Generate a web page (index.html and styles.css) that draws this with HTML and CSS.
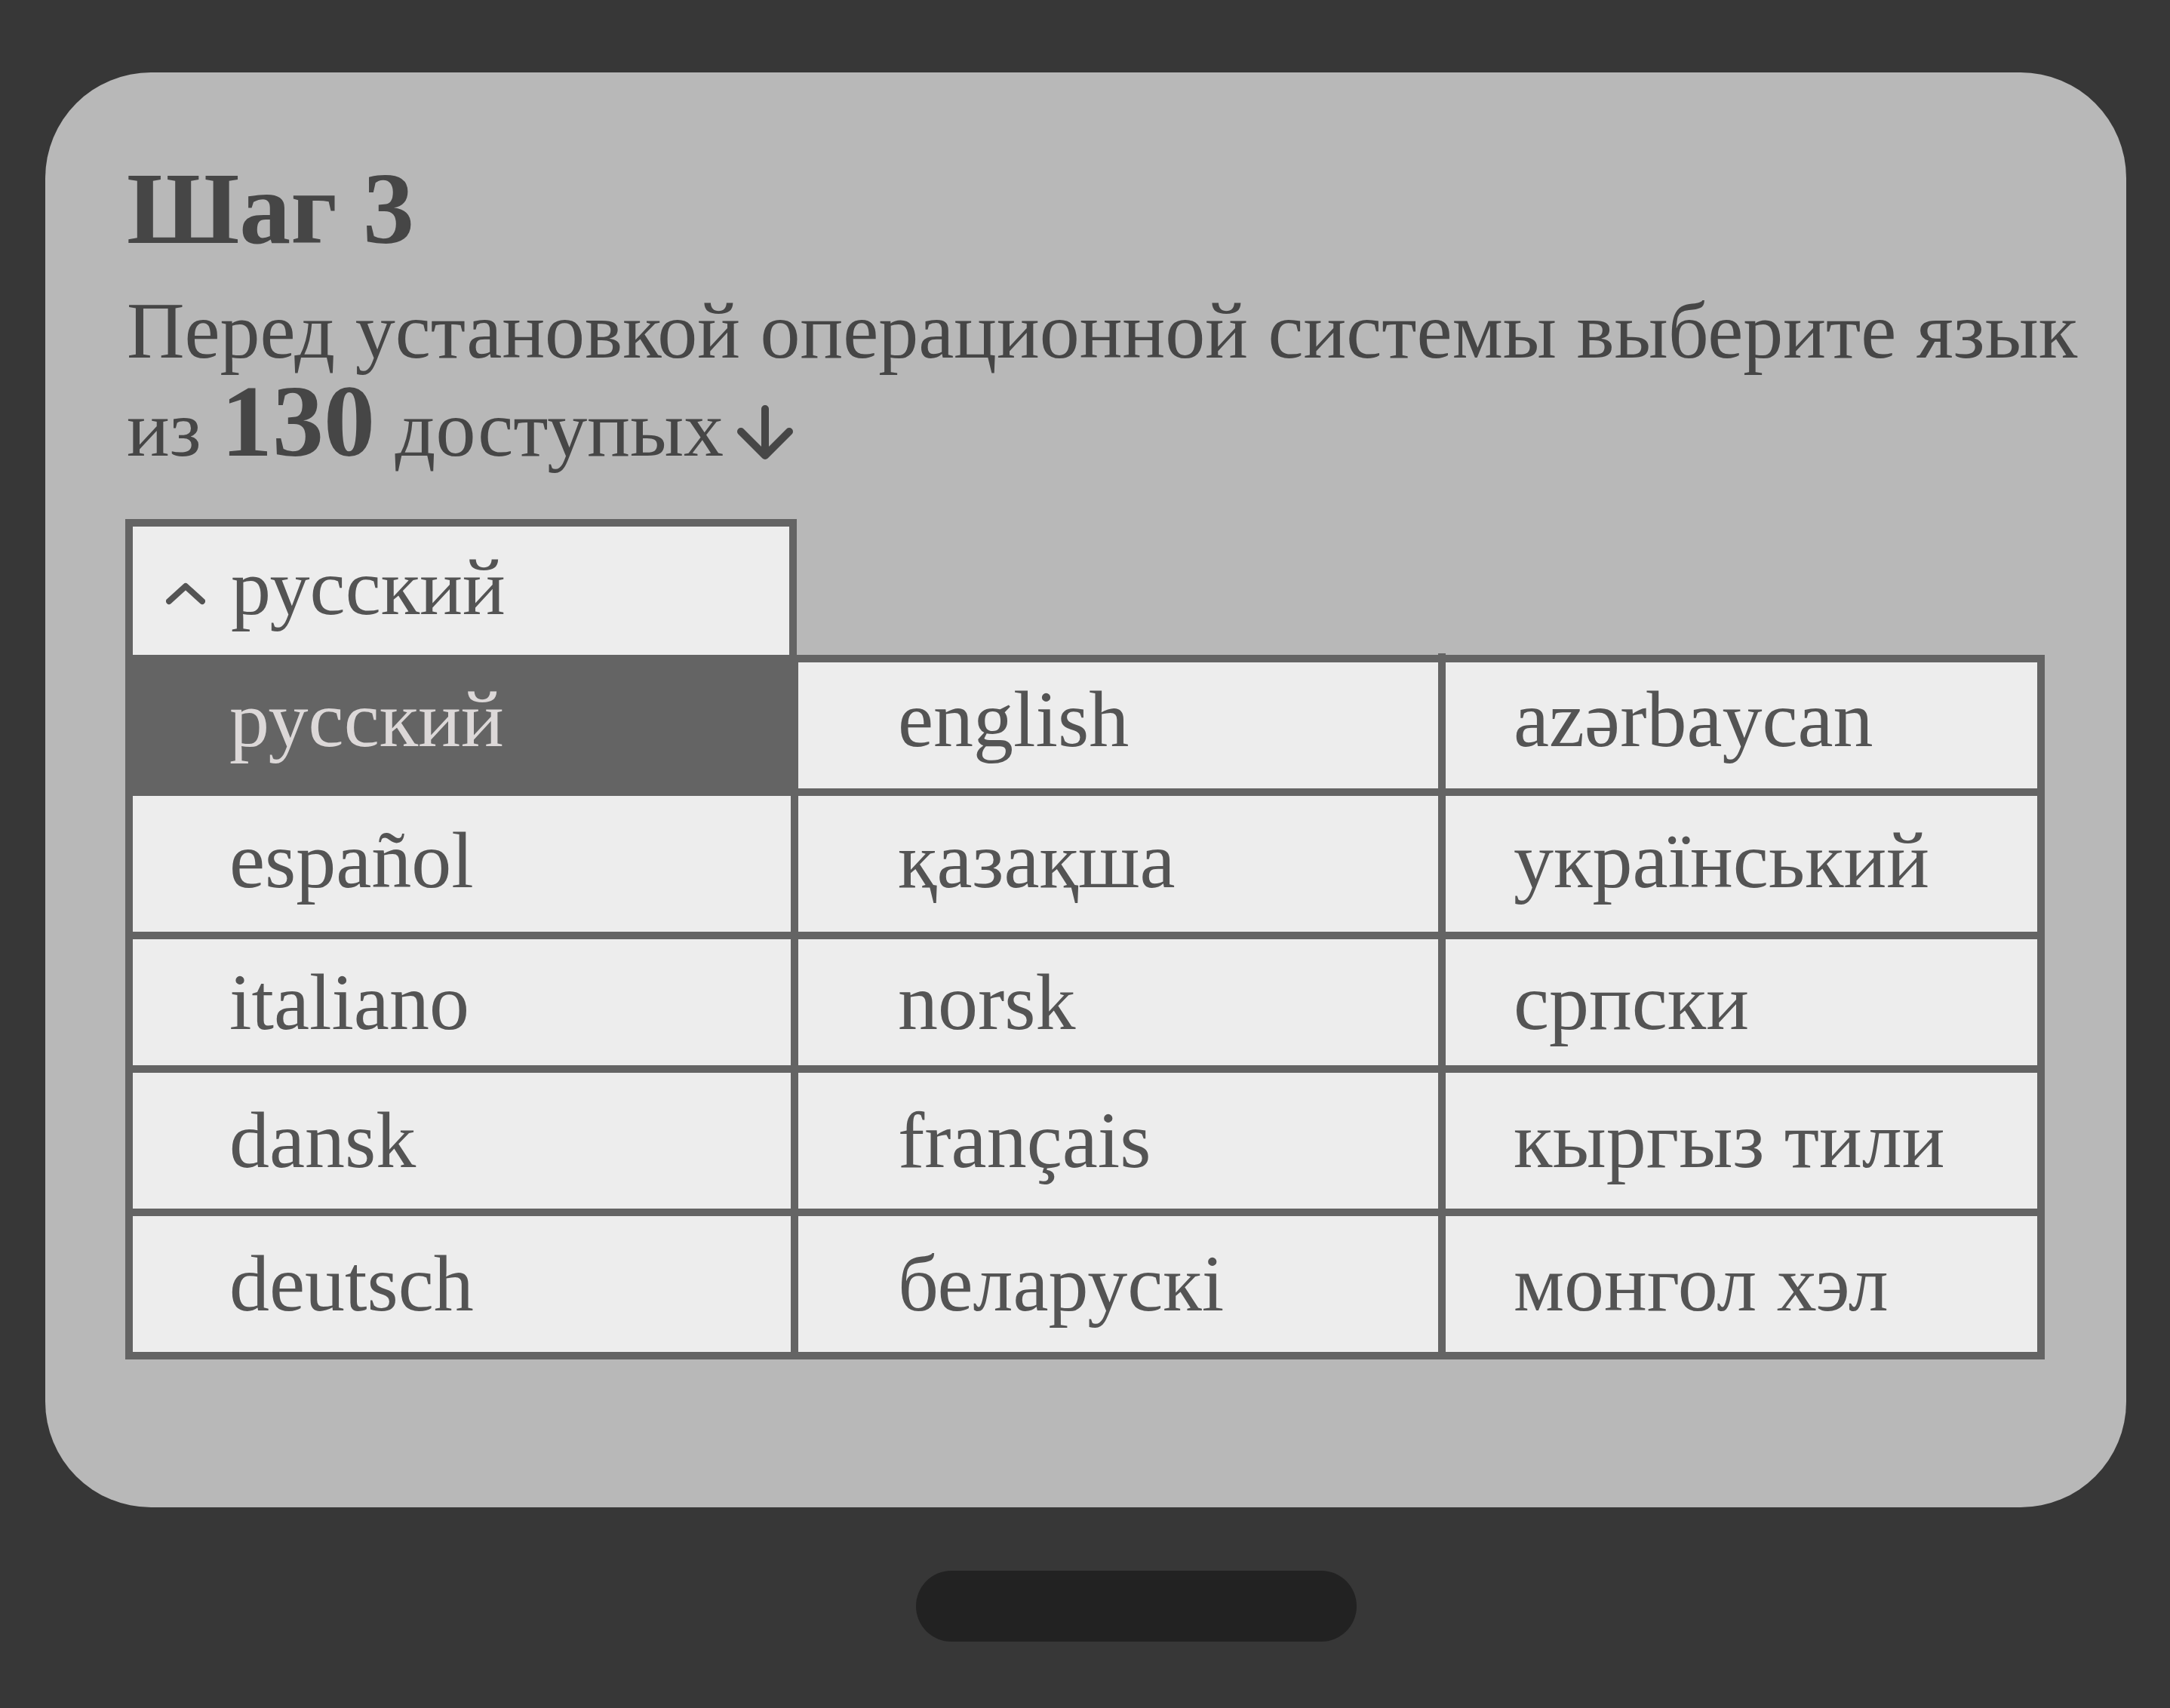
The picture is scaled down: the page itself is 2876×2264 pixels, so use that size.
FILE: index.html
```html
<!DOCTYPE html>
<html lang="ru">
<head>
<meta charset="utf-8">
<meta name="viewport" content="width=device-width, initial-scale=1">
<title>Шаг 3</title>
<link rel="stylesheet" href="styles.css">
</head>
<body>
<main class="card">
  <h1 class="title">Шаг 3</h1>
  <p class="lead">Перед установкой операционной системы выберите язык<br>из <strong class="count">130</strong> доступых<svg class="arrow" viewBox="0 0 74 72" aria-hidden="true"><path d="M37 5V67M5 35L37 67L69 35"/></svg></p>
  <div class="picker">
    <button class="trigger" type="button" aria-haspopup="listbox" aria-expanded="true" aria-controls="languages">
      <svg class="chevron" viewBox="0 0 52 30" aria-hidden="true"><path d="M4 25L26 5L48 25"/></svg>
      <span>русский</span>
    </button>
    <div class="options" id="languages" role="listbox" aria-label="Язык">
      <button class="option option-active" type="button" role="option" aria-selected="true">русский</button>
      <button class="option" type="button" role="option">english</button>
      <button class="option" type="button" role="option">azərbaycan</button>
      <button class="option" type="button" role="option">español</button>
      <button class="option" type="button" role="option">қазақша</button>
      <button class="option" type="button" role="option">український</button>
      <button class="option" type="button" role="option">italiano</button>
      <button class="option" type="button" role="option">norsk</button>
      <button class="option" type="button" role="option">српски</button>
      <button class="option" type="button" role="option">dansk</button>
      <button class="option" type="button" role="option">français</button>
      <button class="option" type="button" role="option">кыргыз тили</button>
      <button class="option" type="button" role="option">deutsch</button>
      <button class="option" type="button" role="option">беларускі</button>
      <button class="option" type="button" role="option">монгол хэл</button>
    </div>
  </div>
</main>
<div class="home-bar"></div>
</body>
</html>
```
FILE: styles.css
```css
* {
  box-sizing: border-box;
}

body {
  margin: 0;
  padding: 96px 58px 60px 60px;
  min-height: 100vh;
  background: #373737;
  color: #464646;
  font-family: "Liberation Serif", "Times New Roman", serif;
}

.card {
  padding: 116px 48px 196px 106px;
  border-radius: 140px;
  background: #b8b8b8;
}

.title {
  margin: 0;
  padding-left: 2px;
  font-size: 136px;
  line-height: 128px;
  font-weight: 700;
}

.lead {
  margin: 34px 0 54px;
  padding-left: 2px;
  font-size: 106px;
  line-height: 130px;
}

.count {
  font-size: 136px;
  line-height: 100px;
}

.arrow {
  width: 74px;
  height: 72px;
  margin-left: 18px;
  vertical-align: -5px;
}

.arrow path,
.chevron path {
  fill: none;
  stroke: currentColor;
  stroke-width: 10;
  stroke-linecap: round;
  stroke-linejoin: round;
}

.picker {
  margin-right: 60px;
}

.trigger {
  display: flex;
  align-items: center;
  gap: 34px;
  width: 35%;
  height: 180px;
  padding: 0 44px 8px;
  border: 10px solid #646464;
  border-bottom: 0;
  background: #ededed;
  color: #545454;
  font: inherit;
  font-size: 106px;
}

.chevron {
  width: 52px;
  height: 30px;
  margin-top: 16px;
}

.chevron path {
  stroke-width: 8;
}

.options {
  display: grid;
  grid-template-columns: 872fr 848fr 784fr;
  grid-template-rows: 167px 180px 167px 180px 180px;
  gap: 10px;
  padding: 10px;
  background: #646464;
}

.option {
  padding: 0 0 0 132px;
  border: 0;
  background: #ededed;
  color: #545454;
  font: inherit;
  font-size: 106px;
  line-height: 120px;
  text-align: left;
}

.option:nth-child(3n + 1) {
  padding-left: 128px;
}

.option:nth-child(3n + 3) {
  padding-left: 90px;
}

.option:nth-child(-n + 6) {
  padding-bottom: 8px;
}

.option:nth-child(-n + 3) {
  padding-bottom: 16px;
}

.option-active {
  background: #646464;
  color: #dcd8d8;
}

/* the divider of the last column rises a little above the frame */
.option:nth-child(3) {
  position: relative;
}

.option:nth-child(3)::before {
  content: "";
  position: absolute;
  top: -12px;
  left: -10px;
  width: 10px;
  height: 12px;
  background: #646464;
}

.home-bar {
  width: 584px;
  height: 94px;
  margin: 84px 0 0 1154px;
  border-radius: 47px;
  background: #222222;
}
```
